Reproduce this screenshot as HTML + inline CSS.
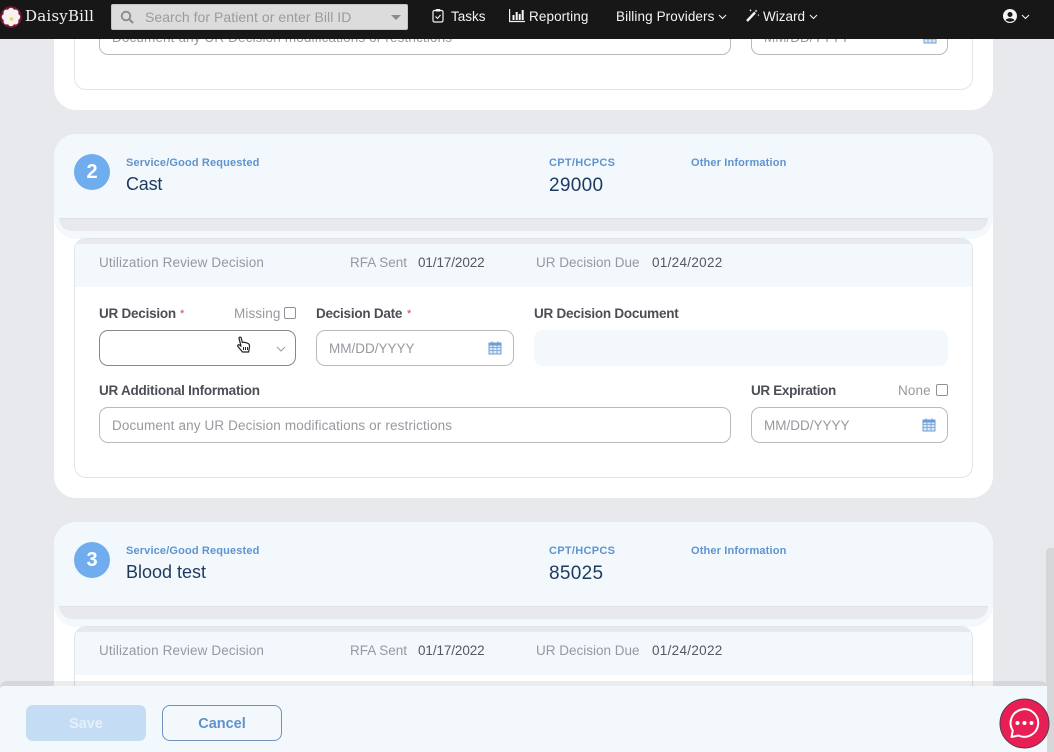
<!DOCTYPE html>
<html><head><meta charset="utf-8">
<style>
html,body{margin:0;padding:0;width:1054px;height:752px;overflow:hidden}
body{position:relative;background:#e8e9ed;font-family:"Liberation Sans",sans-serif}
div,span{position:absolute;box-sizing:border-box;white-space:nowrap}
svg{position:absolute}
#root{left:0;top:0;width:1054px;height:752px;overflow:hidden;background:#e8e9ed}
.card{left:54px;width:939px;height:364px;background:#fff;border-radius:22px;overflow:hidden}
.head{left:0;top:0;width:939px;height:105px;background:#f3f8fd;border-radius:22px}
.band{left:5px;top:84px;width:929px;height:13px;background:#e8e9ed;border-top:1px solid #dfe2e6;border-radius:0 0 18px 18px}
.num{left:20px;top:20px;width:36px;height:36px;border-radius:50%;background:#6fadee;color:#fff;font-weight:bold;font-size:20px;line-height:36px;text-align:center}
.lb{top:22px;font-size:11px;line-height:14px;color:#5f94cf;font-weight:bold;letter-spacing:.15px}
.val{top:40px;font-size:18px;line-height:20px;color:#1c3a5e}
.panel{left:20px;top:104px;width:899px;height:240px;border:1px solid #e2e4e8;border-radius:12px;overflow:hidden;background:#fff}
.phead{left:0;top:0;width:899px;height:48px;background:#f3f8fd;border-top:5px solid #e8e9ed}
.g{font-size:13.5px;line-height:16px;color:#96999f;letter-spacing:.11px}
.d{font-size:13.5px;line-height:16px;color:#55585e}
.l{font-size:13.5px;line-height:16px;font-weight:bold;color:#4b4e55;letter-spacing:-.24px}
.req{font-size:11px;line-height:14px;color:#d8345f}
.inp{height:36px;border:1px solid #b9babd;border-radius:9px;background:#fff}
.ph{font-size:13.5px;line-height:16px;color:#96999f;letter-spacing:.13px}
.cb{width:12px;height:12px;border:1px solid #8f9196;border-radius:2px;background:#fff}
.nav{top:9px;color:#f4f4f4;font-size:13.5px;line-height:16px}
</style></head><body>
<div id="root">

<div class="card" style="top:-254px">
 <div class="panel" style="left:20px;top:104px">
  <div class="inp" style="left:24px;top:168px;width:632px"></div>
  <div class="ph" style="left:37px;top:179px">Document any UR Decision modifications or restrictions</div>
  <div class="inp" style="left:676px;top:168px;width:197px"></div>
  <div class="ph" style="left:689px;top:179px;letter-spacing:0">MM/DD/YYYY</div>
  <svg style="left:848px;top:179px" width="14" height="14" viewBox="0 0 14 14"><rect x="1" y="2" width="12" height="11" fill="#dbe8f6" stroke="#6d9fd6"/><path d="M1 6h12M1 9h12M5 4v9M9 4v9" stroke="#6d9fd6" stroke-width=".8"/></svg>
 </div>
</div>

<!-- Card 2 -->
<div class="card" style="top:134px">
 <div class="head"></div><div class="band"></div>
 <div class="num">2</div>
 <div class="lb" style="left:72px">Service/Good Requested</div>
 <div class="val" style="left:72px;letter-spacing:-.2px">Cast</div>
 <div class="lb" style="left:495px;letter-spacing:.3px">CPT/HCPCS</div>
 <div class="val" style="left:495px;top:42px;font-size:19px;letter-spacing:.3px">29000</div>
 <div class="lb" style="left:637px">Other Information</div>
 <div class="panel">
  <div class="phead"></div>
  <div class="g" style="left:24px;top:16px">Utilization Review Decision</div>
  <div class="g" style="left:275px;top:16px;letter-spacing:0">RFA Sent</div>
  <div class="d" style="left:343px;top:16px;letter-spacing:-.1px">01/17/2022</div>
  <div class="g" style="left:461px;top:16px;letter-spacing:0">UR Decision Due</div>
  <div class="d" style="left:577px;top:16px;letter-spacing:.3px">01/24/2022</div>

  <div class="l" style="left:24px;top:67px">UR Decision</div>
  <div class="req" style="left:105px;top:68px">*</div>
  <div class="g" style="left:159px;top:67px">Missing</div>
  <div class="cb" style="left:209px;top:68px"></div>
  <div class="inp" style="left:24px;top:91px;width:197px;border-color:#85888d"></div>
  <svg style="left:201px;top:107px" width="10" height="6" viewBox="0 0 10 6"><path d="M1 1l4 4 4-4" fill="none" stroke="#9a9ca1" stroke-width="1"/></svg>
  <svg style="left:161px;top:97px" width="17" height="19" viewBox="0 0 17 19"><path d="M3 2.200c0-1.500 2-1.500 2.300 0l1 4.300 1-.3 1 .2 1 .1 1.200.3 1.700.7c1.300.8 1.500 2.500 1.200 4l-.8 4.500H6.500L2 10.500c-1-1.200.5-2.300 1.800-1.300l1.200 1z" fill="#fff" stroke="#222" stroke-width="1.200" stroke-linejoin="round"/><path d="M7.500 11v3M9.500 11v3M11.500 11v3" stroke="#222" stroke-width="1"/></svg>

  <div class="l" style="left:241px;top:67px">Decision Date</div>
  <div class="req" style="left:332px;top:68px">*</div>
  <div class="inp" style="left:241px;top:91px;width:198px"></div>
  <div class="ph" style="left:254px;top:102px;letter-spacing:0">MM/DD/YYYY</div>
  <svg style="left:413px;top:102px" width="14" height="14" viewBox="0 0 14 14"><rect x="1" y="2" width="12" height="11" fill="#dbe8f6" stroke="#6d9fd6"/><rect x="1" y="2" width="12" height="2.500" fill="#6d9fd6"/><path d="M1 6.500h12M1 9.500h12M5 4v9M9 4v9" stroke="#6d9fd6" stroke-width=".8"/><path d="M4 .5v3M10 .5v3" stroke="#6d9fd6" stroke-width="1.200"/></svg>

  <div class="l" style="left:459px;top:67px">UR Decision Document</div>
  <div style="left:459px;top:91px;width:414px;height:36px;background:#f3f8fd;border-radius:9px"></div>

  <div class="l" style="left:24px;top:144px">UR Additional Information</div>
  <div class="inp" style="left:24px;top:168px;width:632px"></div>
  <div class="ph" style="left:37px;top:179px">Document any UR Decision modifications or restrictions</div>

  <div class="l" style="left:676px;top:144px;letter-spacing:-.33px">UR Expiration</div>
  <div class="g" style="left:823px;top:144px">None</div>
  <div class="cb" style="left:861px;top:145px"></div>
  <div class="inp" style="left:676px;top:168px;width:197px"></div>
  <div class="ph" style="left:689px;top:179px;letter-spacing:0">MM/DD/YYYY</div>
  <svg style="left:847px;top:179px" width="14" height="14" viewBox="0 0 14 14"><rect x="1" y="2" width="12" height="11" fill="#dbe8f6" stroke="#6d9fd6"/><rect x="1" y="2" width="12" height="2.500" fill="#6d9fd6"/><path d="M1 6.500h12M1 9.500h12M5 4v9M9 4v9" stroke="#6d9fd6" stroke-width=".8"/><path d="M4 .5v3M10 .5v3" stroke="#6d9fd6" stroke-width="1.200"/></svg>
 </div>
</div>

<!-- Card 3 -->
<div class="card" style="top:522px;height:230px;border-radius:22px 22px 0 0">
 <div class="head"></div><div class="band"></div>
 <div class="num">3</div>
 <div class="lb" style="left:72px">Service/Good Requested</div>
 <div class="val" style="left:72px">Blood test</div>
 <div class="lb" style="left:495px;letter-spacing:.3px">CPT/HCPCS</div>
 <div class="val" style="left:495px;top:42px;font-size:19px;letter-spacing:.3px">85025</div>
 <div class="lb" style="left:637px">Other Information</div>
 <div class="panel" style="height:126px;border-radius:12px 12px 0 0">
  <div class="phead"></div>
  <div class="g" style="left:24px;top:16px">Utilization Review Decision</div>
  <div class="g" style="left:275px;top:16px;letter-spacing:0">RFA Sent</div>
  <div class="d" style="left:343px;top:16px;letter-spacing:-.1px">01/17/2022</div>
  <div class="g" style="left:461px;top:16px;letter-spacing:0">UR Decision Due</div>
  <div class="d" style="left:577px;top:16px;letter-spacing:.3px">01/24/2022</div>
 </div>
</div>

<!-- Scrollbar -->
<div style="left:1046px;top:548px;width:8px;height:204px;background:#d6d7d9;border-radius:4px 0 0 0"></div>

<!-- Nav -->
<div style="left:0;top:0;width:1054px;height:39px;background:#171717"></div>
<svg style="left:0;top:6px" width="23" height="22" viewBox="0 0 23 22"><circle cx="11" cy="11" r="10.800" fill="#7a1530"/><g fill="#f6f2f2"><circle cx="11" cy="5" r="3.200"/><circle cx="15.300" cy="6.700" r="3.200"/><circle cx="17" cy="11" r="3.200"/><circle cx="15.300" cy="15.300" r="3.200"/><circle cx="11" cy="17" r="3.200"/><circle cx="6.700" cy="15.300" r="3.200"/><circle cx="5" cy="11" r="3.200"/><circle cx="6.700" cy="6.700" r="3.200"/><circle cx="11" cy="11" r="4.500"/></g><circle cx="11.500" cy="13" r="1.800" fill="#ecd860"/></svg>
<div style="left:25px;top:7px;font-family:'DejaVu Serif',serif;font-size:15px;line-height:18px;color:#f2f2f2;letter-spacing:.2px">DaisyBill</div>
<div style="left:111px;top:4px;width:297px;height:26px;background:#dcdcdc;border:1px solid #c4c4c4;border-radius:2px"></div>
<svg style="left:120px;top:10px" width="14" height="14" viewBox="0 0 14 14"><circle cx="6" cy="6" r="4.300" fill="none" stroke="#8a8a8a" stroke-width="1.800"/><path d="M9.200 9.200L13 13" stroke="#8a8a8a" stroke-width="2"/></svg>
<div style="left:145px;top:9px;font-size:14px;line-height:16px;color:#9b9b9b;letter-spacing:.05px">Search for Patient or enter Bill ID</div>
<div style="left:391px;top:15px;width:0;height:0;border-left:5px solid transparent;border-right:5px solid transparent;border-top:5px solid #8a8a8a"></div>

<svg style="left:432px;top:8px" width="12" height="15" viewBox="0 0 12 15"><rect x="1" y="2.500" width="10" height="11.500" rx="1.500" fill="none" stroke="#f4f4f4" stroke-width="1.200"/><rect x="3.800" y="1" width="4.400" height="2.500" fill="#f4f4f4"/><path d="M3.500 8.500l2 2 3-3.500" fill="none" stroke="#f4f4f4" stroke-width="1.100"/></svg>
<div class="nav" style="left:451px">Tasks</div>
<svg style="left:509px;top:9px" width="16" height="14" viewBox="0 0 16 14"><path d="M.6 0v12.500H16" fill="none" stroke="#f4f4f4" stroke-width="1.200"/><path d="M3.500 6h2v5h-2zM6.700 3h2v8h-2zM9.700 5h2v6h-2zM12.700 1h2v10h-2z" fill="#f4f4f4"/></svg>
<div class="nav" style="left:529px;letter-spacing:.1px">Reporting</div>
<div class="nav" style="left:616px;letter-spacing:.1px">Billing Providers</div>
<svg style="left:718px;top:14px" width="9" height="6" viewBox="0 0 9 6"><path d="M1 1l3.500 3.500L8 1" fill="none" stroke="#f4f4f4" stroke-width="1.100"/></svg>
<svg style="left:746px;top:8px" width="14" height="14" viewBox="0 0 14 14"><path d="M1 13L9 4.500" stroke="#f4f4f4" stroke-width="2.400"/><path d="M10 1.500l.5 1 1 .5-1 .5-.5 1-.5-1-1-.5 1-.5zM4.500 1l.4 1 1 .4-1 .4-.4 1-.4-1-1-.4 1-.4zM12.500 6l.3.8.8.3-.8.3-.3.8-.3-.8-.8-.3.8-.3z" fill="#f4f4f4"/></svg>
<div class="nav" style="left:763px">Wizard</div>
<svg style="left:809px;top:14px" width="9" height="6" viewBox="0 0 9 6"><path d="M1 1l3.500 3.500L8 1" fill="none" stroke="#f4f4f4" stroke-width="1.100"/></svg>
<svg style="left:1003px;top:9px" width="14" height="14" viewBox="0 0 14 14"><circle cx="7" cy="7" r="7" fill="#f4f4f4"/><circle cx="7" cy="5.500" r="2.500" fill="#171717"/><path d="M2.500 11.500c1-3 8-3 9 0L7 13z" fill="#171717"/></svg>
<svg style="left:1021px;top:14px" width="9" height="6" viewBox="0 0 9 6"><path d="M1 1l3.500 3.500L8 1" fill="none" stroke="#f4f4f4" stroke-width="1.100"/></svg>

<!-- Footer -->
<div style="left:0;top:681px;width:1047px;height:8px;background:rgba(0,0,0,.075);border-radius:7px 7px 0 0"></div>
<div style="left:0;top:686px;width:1047px;height:66px;background:#f3f8fd;border-radius:3px 0 0 0"></div>
<div style="left:26px;top:705px;width:120px;height:36px;background:#c5dcf5;border-radius:7px;color:#e6f0fa;font-weight:bold;font-size:14.500px;line-height:38px;text-align:center">Save</div>
<div style="left:162px;top:705px;width:120px;height:36px;border:1px solid #6f93ba;border-radius:8px;color:#5e92cd;font-weight:bold;font-size:14.500px;line-height:36px;text-align:center">Cancel</div>

<!-- Chat -->
<svg style="left:999px;top:698px" width="52" height="52" viewBox="0 0 52 52"><circle cx="25.500" cy="25.500" r="24.500" fill="#e81f55" stroke="#5a3a48" stroke-width="1"/><path d="M12.500 39l1.300-6.500A13.800 13.800 0 1 1 19.500 37.500z" fill="none" stroke="#fff" stroke-width="2" stroke-linejoin="round"/><circle cx="18.500" cy="25" r="2" fill="#fff"/><circle cx="25.500" cy="25" r="2" fill="#fff"/><circle cx="32.500" cy="25" r="2" fill="#fff"/></svg>
</div>
</body></html>
